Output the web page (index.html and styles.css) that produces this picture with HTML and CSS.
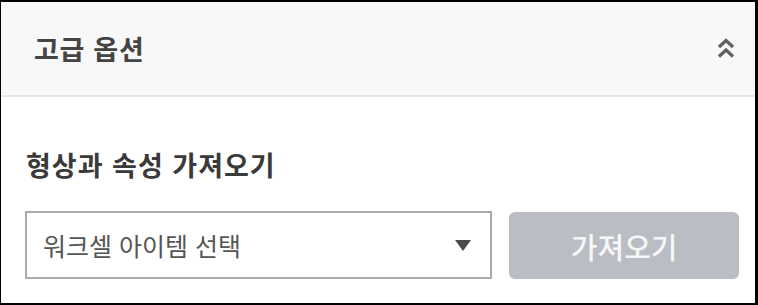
FILE: index.html
```html
<!DOCTYPE html>
<html lang="ko">
<head>
<meta charset="utf-8">
<link rel="stylesheet" href="styles.css">
</head>
<body>
<div class="panel">
  <div class="panel-header">
    <span class="panel-title">고급 옵션</span>
    <svg class="collapse-icon" width="18" height="21" viewBox="0 0 18 21">
      <path d="M2 9 L9 2.5 L16 9" fill="none" stroke="#5f5f5f" stroke-width="3.2"/>
      <path d="M2 18.5 L9 12 L16 18.5" fill="none" stroke="#5f5f5f" stroke-width="3.2"/>
    </svg>
  </div>
  <div class="panel-body">
    <div class="section-title">형상과 속성 가져오기</div>
    <div class="import-row">
      <div class="select-box">
        <span class="select-text">워크셀 아이템 선택</span>
        <span class="select-caret"></span>
      </div>
      <button class="import-btn" disabled>가져오기</button>
    </div>
  </div>
</div>
</body>
</html>
```
FILE: styles.css
```css
html, body {
  margin: 0;
  padding: 0;
  background: #fff;
}
body {
  font-family: "Noto Sans CJK KR", "Noto Sans", sans-serif;
}
.panel {
  box-sizing: border-box;
  width: 758px;
  height: 305px;
  border: 2px solid #000;
  border-left-width: 1px;
  border-right-width: 3px;
  display: flex;
  flex-direction: column;
  background: #fff;
}
.panel-header {
  height: 93px;
  flex: none;
  background: #f8f8f8;
  border-bottom: 2px solid #e6e6e6;
  display: flex;
  align-items: center;
  justify-content: space-between;
  padding: 0 20px 0 33px;
}
.panel-title {
  font-size: 27px;
  font-weight: 700;
  color: #444;
  line-height: 1;
  letter-spacing: 0.7px;
}
.collapse-icon {
  display: block;
}
.panel-body {
  padding: 0 16px 0 24px;
  display: flex;
  flex-direction: column;
}
.section-title {
  margin-top: 52px;
  font-size: 27px;
  font-weight: 700;
  color: #3a3a3a;
  line-height: 32px;
  padding-left: 1px;
  letter-spacing: 1px;
}
.import-row {
  margin-top: 30px;
  display: flex;
  gap: 17px;
}
.select-box {
  box-sizing: border-box;
  width: 468px;
  height: 68px;
  border: 2px solid #aaa;
  display: flex;
  align-items: center;
  justify-content: space-between;
  padding: 0 19px 0 16px;
}
.select-text {
  font-size: 25px;
  color: #555;
}
.select-caret {
  width: 0;
  height: 0;
  border-left: 8px solid transparent;
  border-right: 8px solid transparent;
  border-top: 11px solid #4a4a4a;
}
.import-btn {
  box-sizing: border-box;
  width: 230px;
  height: 67px;
  border: none;
  border-radius: 6px;
  background: #babdc4;
  color: #f7f7f7;
  font-family: inherit;
  font-size: 29px;
  font-weight: 500;
  margin-top: 1px;
}
```
